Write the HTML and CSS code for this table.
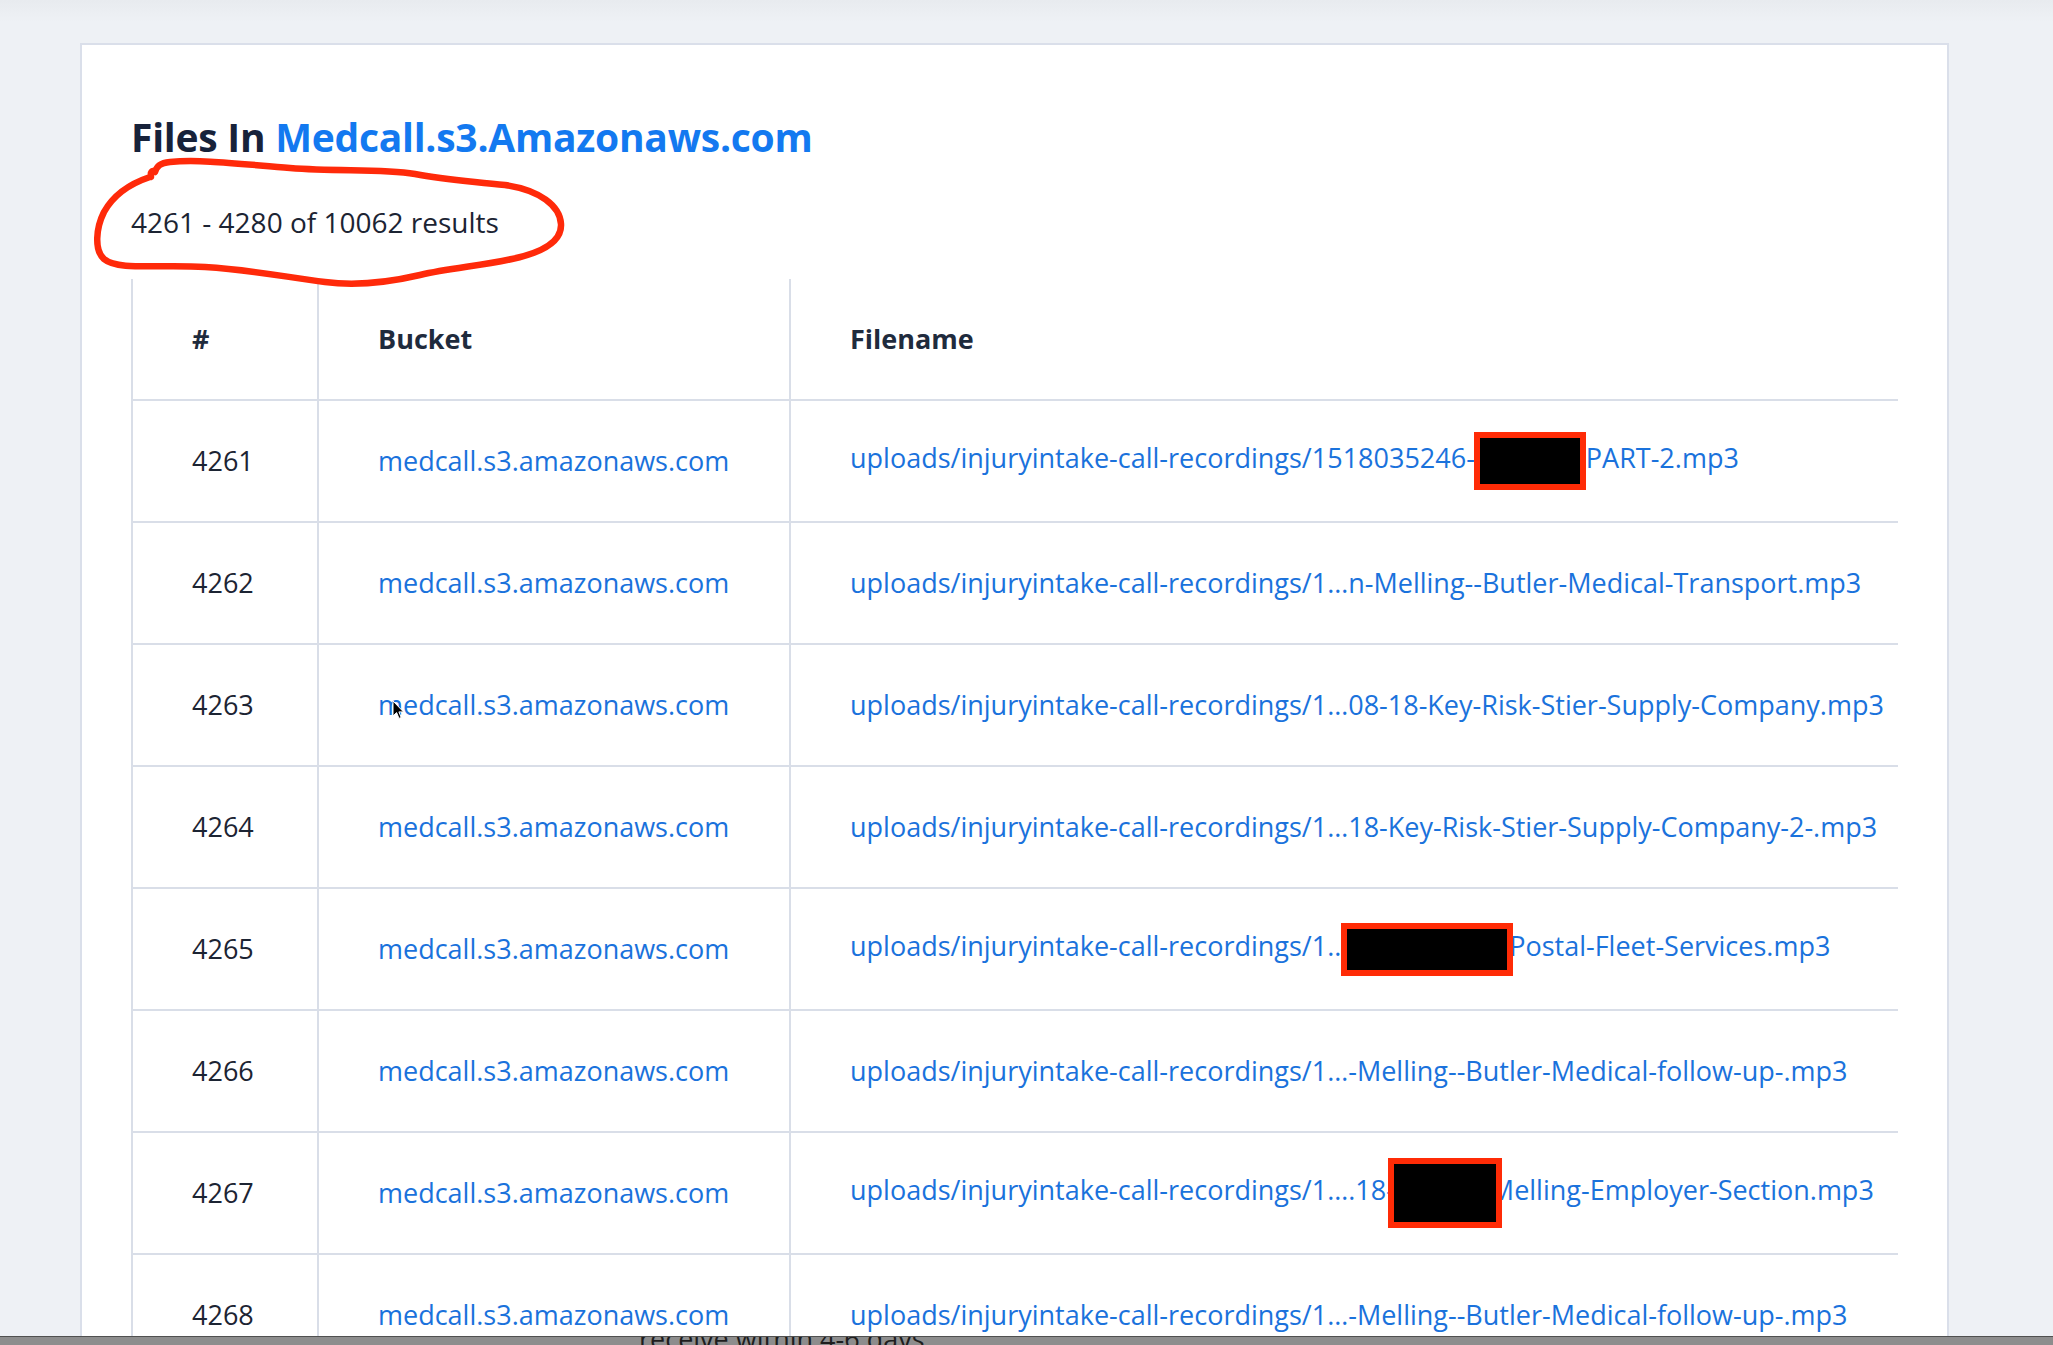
FILE: index.html
```html
<!DOCTYPE html>
<html lang="en">
<head>
<meta charset="utf-8">
<title>Files In Medcall.s3.Amazonaws.com</title>
<link rel="stylesheet" href="styles.css">
</head>
<body>
<main class="card">
  <h1 class="title">Files In <a class="title-link" href="#">Medcall.s3.Amazonaws.com</a></h1>
  <p class="count">4261 - 4280 of 10062 results</p>
  <table class="files">
    <colgroup><col class="col-num"><col class="col-bucket"><col class="col-file"></colgroup>
    <thead>
      <tr><th>#</th><th>Bucket</th><th>Filename</th></tr>
    </thead>
    <tbody>
      <tr><td>4261</td><td><a href="#">medcall.s3.amazonaws.com</a></td><td><a href="#">uploads/injuryintake-call-recordings/1518035246-<span class="redact r1"></span>PART-2.mp3</a></td></tr>
      <tr><td>4262</td><td><a href="#">medcall.s3.amazonaws.com</a></td><td><a href="#">uploads/injuryintake-call-recordings/1…n-Melling--Butler-Medical-Transport.mp3</a></td></tr>
      <tr><td>4263</td><td><a href="#">medcall.s3.amazonaws.com</a></td><td><a href="#">uploads/injuryintake-call-recordings/1…08-18-Key-Risk-Stier-Supply-Company.mp3</a></td></tr>
      <tr><td>4264</td><td><a href="#">medcall.s3.amazonaws.com</a></td><td><a href="#">uploads/injuryintake-call-recordings/1…18-Key-Risk-Stier-Supply-Company-2-.mp3</a></td></tr>
      <tr><td>4265</td><td><a href="#">medcall.s3.amazonaws.com</a></td><td><a href="#">uploads/injuryintake-call-recordings/1…<span class="redact r5"></span>Postal-Fleet-Services.mp3</a></td></tr>
      <tr><td>4266</td><td><a href="#">medcall.s3.amazonaws.com</a></td><td><a href="#">uploads/injuryintake-call-recordings/1…-Melling--Butler-Medical-follow-up-.mp3</a></td></tr>
      <tr><td>4267</td><td><a href="#">medcall.s3.amazonaws.com</a></td><td><a href="#">uploads/injuryintake-call-recordings/1….18-<span class="redact r7"></span>Melling-Employer-Section.mp3</a></td></tr>
      <tr><td>4268</td><td><a href="#">medcall.s3.amazonaws.com</a></td><td><a href="#">uploads/injuryintake-call-recordings/1…-Melling--Butler-Medical-follow-up-.mp3</a></td></tr>
    </tbody>
  </table>
</main>

<svg class="annotation" viewBox="0 0 2053 1345" aria-hidden="true">
  <path d="M151,177 C150,172 152,170 155,172 C157,166 160,163 170,162 C200,159 240,164 290,168 C340,172 380,168 415,174 C445,180 470,181 505,185 C540,190 560,206 561,224 C562,243 540,253 512,259 C480,266 450,268 420,275 C390,282 355,286 325,282 C290,278 255,270 205,267 C160,264 118,271 104,259 C94,250 96,228 104,212 C114,194 132,183 150,177"
        fill="none" stroke="#ff2a0a" stroke-width="6.5" stroke-linecap="round" stroke-linejoin="round"/>
</svg>

<svg class="cursor" viewBox="0 0 12 20" aria-hidden="true">
  <path d="M1,1 L1,16 L4.6,12.6 L7,18.4 L9.2,17.5 L6.9,11.9 L11.5,11.9 Z" fill="#000" stroke="#fff" stroke-width="1" stroke-linejoin="round"/>
</svg>

<div class="dock"><span class="dock-text">receive within 4-6 days.</span></div>
</body>
</html>
```

FILE: styles.css
```css
html, body {
  margin: 0;
  height: 100%;
  overflow: hidden;
}

body {
  position: relative;
  box-sizing: border-box;
  padding: 43px 0 0 80px;
  background: linear-gradient(#e8ebef 0, #eef1f5 22px) #eef1f5;
  font-family: "Open Sans", "Liberation Sans", sans-serif;
  color: #1c2433;
}

.card {
  box-sizing: border-box;
  width: 1869px;
  min-height: 1400px;
  padding: 68px 49px 0 49px;
  background: #fff;
  border: 2px solid #dadfea;
  border-bottom: none;
}

.title {
  margin: 0;
  font-size: 39px;
  line-height: 48px;
  font-weight: 700;
  letter-spacing: -0.25px;
  color: #17223a;
}

.title-link {
  color: #1379f0;
  text-decoration: none;
}

.count {
  margin: 43px 0 0;
  font-size: 28px;
  line-height: 36px;
  color: #1c2433;
}

.files {
  width: 100%;
  margin-top: 39px;
  border-collapse: separate;
  border-spacing: 0;
  table-layout: fixed;
}

.col-num { width: 186px; }
.col-bucket { width: 472px; }

.files th,
.files td {
  box-sizing: border-box;
  padding: 0 0 0 59px;
  border-left: 2px solid #d9dee8;
  border-bottom: 2px solid #d9dee8;
  text-align: left;
  vertical-align: middle;
  white-space: nowrap;
  font-size: 27px;
  line-height: 36px;
}

.files th {
  height: 122px;
  font-weight: 700;
  color: #1f2b3d;
}

.files td {
  height: 122px;
  font-weight: 400;
  color: #1c2433;
}

.files a {
  color: #1a72dc;
  text-decoration: none;
}

.redact {
  position: relative;
  display: inline-block;
  box-sizing: border-box;
  border: 6px solid #ff2b06;
  background: #000;
  vertical-align: middle;
}

.r1 { width: 112px; height: 58px; top: 0; margin-left: -1px; }
.r5 { width: 172px; height: 53px; top: 0; margin-left: -7px; margin-right: -4px; }
.r7 { width: 114px; height: 70px; top: 0; margin-right: -12px; margin-left: -7px; }

.annotation {
  position: absolute;
  top: 0;
  left: 0;
  width: 2053px;
  height: 1345px;
  pointer-events: none;
}

.cursor {
  position: absolute;
  left: 392px;
  top: 700px;
  width: 12px;
  height: 20px;
  pointer-events: none;
}

.dock {
  position: fixed;
  left: 0;
  right: 0;
  bottom: 0;
  height: 8px;
  overflow: hidden;
  background: #8d8d8d;
  border-top: 1px solid #505050;
}

.dock-text {
  position: absolute;
  left: 639px;
  top: -12px;
  font-size: 27px;
  line-height: 28px;
  color: #1e1e1e;
}
```
